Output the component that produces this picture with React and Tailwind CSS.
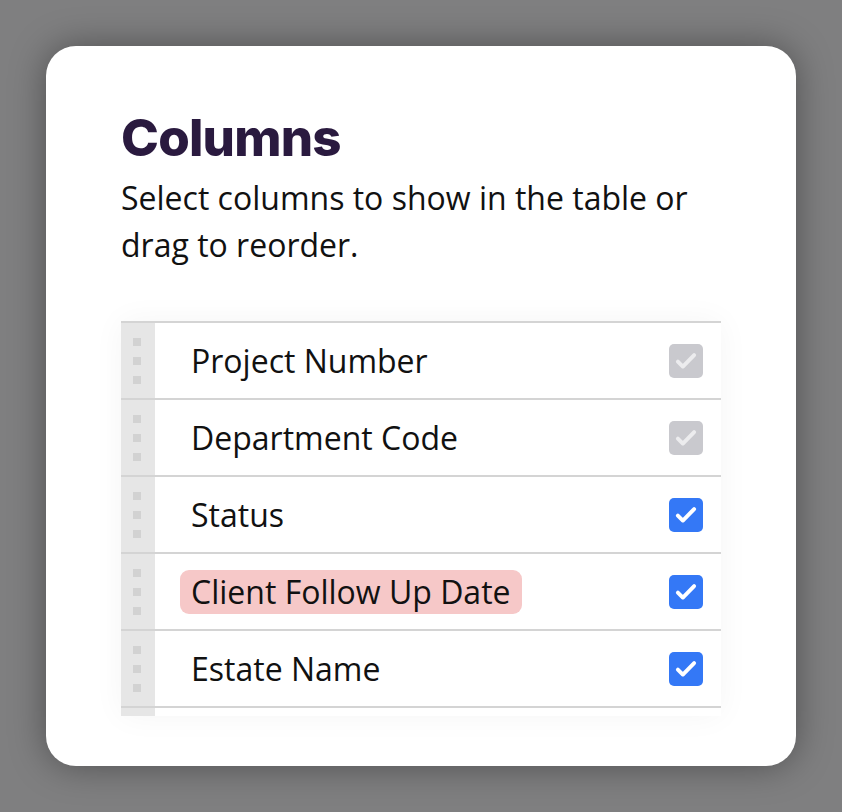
import React from 'react';

const rows = [
  { label: 'Project Number', state: 'locked' },
  { label: 'Department Code', state: 'locked' },
  { label: 'Status', state: 'on' },
  { label: 'Client Follow Up Date', state: 'on', highlight: true },
  { label: 'Estate Name', state: 'on' },
  { label: '', state: 'on' }, // next row, only its top edge shows
];

// --- drag handle dots ---
const Handle = () => (
  <div className="w-[34px] shrink-0 bg-[#e6e6e6] flex flex-col items-center justify-center gap-[11px] pr-[2px]">
    <span className="w-[8px] h-[8px] bg-[#d2d2d2]" />
    <span className="w-[8px] h-[8px] bg-[#d2d2d2]" />
    <span className="w-[8px] h-[8px] bg-[#d2d2d2]" />
  </div>
);

const Check = ({ state }) => {
  const locked = state === 'locked';
  return (
    <div
      className={`w-[34px] h-[34px] rounded-[5px] flex items-center justify-center ${
        locked ? 'bg-[#c9c9ce]' : 'bg-[#3478f6]'
      }`}
    >
      <svg width="26" height="26" viewBox="0 0 24 24" fill="none">
        <path
          d="M4.5 12.5l4.6 4.6L19.5 6.5"
          stroke={locked ? '#ececee' : '#ffffff'}
          strokeWidth="3.6"
          strokeLinecap="round"
          strokeLinejoin="round"
        />
      </svg>
    </div>
  );
};

export default function App() {
  return (
    <div className="w-[842px] h-[812px] bg-[#7f7f80] flex items-start justify-center pt-[46px] font-['Open_Sans',sans-serif]">
      <div className="w-[750px] h-[720px] bg-white rounded-[30px] shadow-[0_0_36px_rgba(0,0,0,0.38)] px-[75px] pt-[62px] pb-[50px] flex flex-col">
        <h1 className="text-[51px] leading-[60px] font-extrabold text-[#2a1a3f] tracking-[-0.8px] font-['Inter',sans-serif]">
          Columns
        </h1>
        <p className="text-[32px] leading-[47px] text-[#111] mt-[6px]">
          Select columns to show in the table or
          <br />
          drag to reorder.
        </p>

        <div className="mt-[53px] flex-1 overflow-hidden shadow-[0_0_30px_rgba(0,0,0,0.045)]">
          {rows.map((r, i) => (
            <div key={i} className="h-[77px] flex border-t-2 border-[#d4d4d4]">
              <Handle />
              <div className="flex-1 flex items-center pl-[25px] pr-[18px]">
                <span
                  className={`px-[11px] h-[44px] flex items-center rounded-[9px] text-[32px] text-[#111] ${
                    r.highlight ? 'bg-[#f6c8c8]' : ''
                  }`}
                >
                  {r.label}
                </span>
                <div className="ml-auto">
                  <Check state={r.state} />
                </div>
              </div>
            </div>
          ))}
        </div>
      </div>
    </div>
  );
}
